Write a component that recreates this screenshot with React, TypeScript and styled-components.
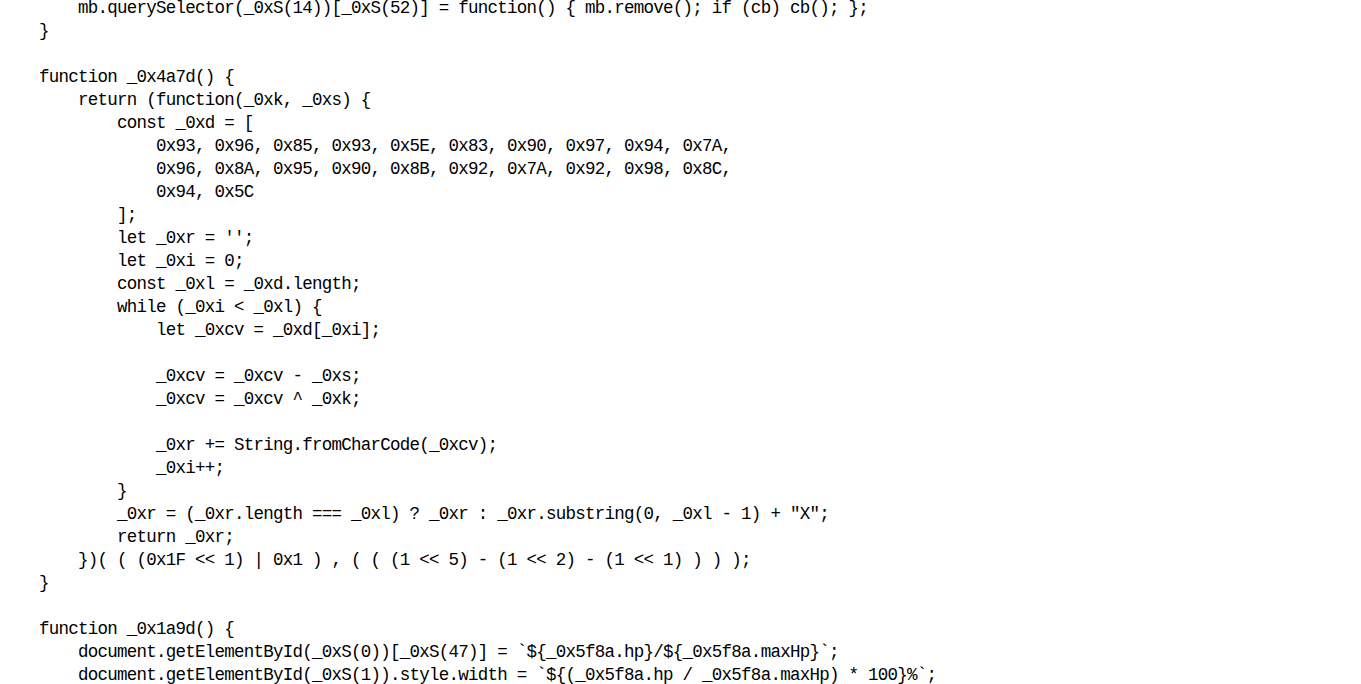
import React from "react";
import styled, { createGlobalStyle } from "styled-components";

const Global = createGlobalStyle`
  html, body { margin: 0; padding: 0; background: #ffffff; }
  body { overflow: hidden; }
`;

const Viewport = styled.div`
  width: 1361px;
  height: 684px;
  overflow: hidden;
  background: #ffffff;
`;

const Code = styled.pre`
  margin: -3px 0 0 0;
  padding: 0 0 0 39px;
  font-family: "Liberation Mono", "DejaVu Sans Mono", monospace;
  font-size: 17.5px;
  letter-spacing: -0.75px;
  line-height: 23px;
  color: #000000;
  white-space: pre;
`;

const Line = styled.div`
  height: 23px;
`;

const lines = [
  "    mb.querySelector(_0xS(14))[_0xS(52)] = function() { mb.remove(); if (cb) cb(); };",
  "}",
  "",
  "function _0x4a7d() {",
  "    return (function(_0xk, _0xs) {",
  "        const _0xd = [",
  "            0x93, 0x96, 0x85, 0x93, 0x5E, 0x83, 0x90, 0x97, 0x94, 0x7A,",
  "            0x96, 0x8A, 0x95, 0x90, 0x8B, 0x92, 0x7A, 0x92, 0x98, 0x8C,",
  "            0x94, 0x5C",
  "        ];",
  "        let _0xr = '';",
  "        let _0xi = 0;",
  "        const _0xl = _0xd.length;",
  "        while (_0xi < _0xl) {",
  "            let _0xcv = _0xd[_0xi];",
  "",
  "            _0xcv = _0xcv - _0xs;",
  "            _0xcv = _0xcv ^ _0xk;",
  "",
  "            _0xr += String.fromCharCode(_0xcv);",
  "            _0xi++;",
  "        }",
  "        _0xr = (_0xr.length === _0xl) ? _0xr : _0xr.substring(0, _0xl - 1) + \"X\";",
  "        return _0xr;",
  "    })( ( (0x1F << 1) | 0x1 ) , ( ( (1 << 5) - (1 << 2) - (1 << 1) ) ) );",
  "}",
  "",
  "function _0x1a9d() {",
  "    document.getElementById(_0xS(0))[_0xS(47)] = `${_0x5f8a.hp}/${_0x5f8a.maxHp}`;",
  "    document.getElementById(_0xS(1)).style.width = `${(_0x5f8a.hp / _0x5f8a.maxHp) * 100}%`;",
];

export default function App() {
  return (
    <Viewport>
      <Global />
      <Code>
        {lines.map((l, i) => (
          <Line key={i}>{l}</Line>
        ))}
      </Code>
    </Viewport>
  );
}
